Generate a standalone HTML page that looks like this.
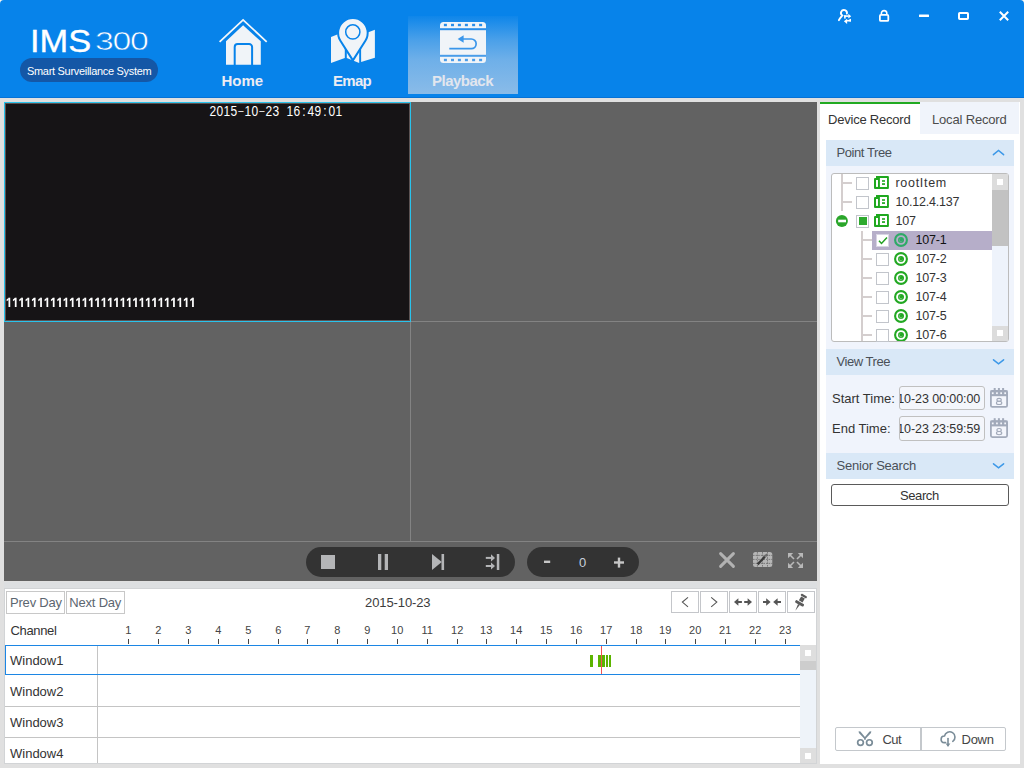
<!DOCTYPE html>
<html>
<head>
<meta charset="utf-8">
<title>IMS 300</title>
<style>
html,body{margin:0;padding:0;}
body{width:1024px;height:768px;overflow:hidden;background:#e0e0e0;font-family:"Liberation Sans",sans-serif;position:relative;}
.abs{position:absolute;}
.t{position:absolute;white-space:nowrap;line-height:1;}
#hdr{left:0;top:0;width:1024px;height:98px;background:#0783ea;border-radius:4px 4px 0 0;}
#hdrline{left:0;top:97px;width:1024px;height:1px;background:#0672d6;}
#pill{left:20px;top:58px;width:138px;height:24px;border-radius:12px;background:#1457a6;}
#pbtab{left:408px;top:16px;width:110px;height:78px;background:linear-gradient(to bottom,rgba(232,228,231,0.03) 0%,rgba(232,228,231,0.30) 31%,rgba(232,228,231,0.46) 56%,rgba(232,228,231,0.58) 100%);}
.nav{font-weight:bold;font-size:15px;color:#ececf2;}
/* grid */
#grid{left:4px;top:102px;width:813px;height:479px;background:#626262;}
.gl{position:absolute;background:#838383;}
#vid{left:4px;top:102px;width:405px;height:218px;border:1px solid #29c3ec;background:#161416;box-shadow:inset 0 0 0 1px #5c5252;}
.osd{font-family:"Liberation Mono",monospace;color:#fff;}
.pillc{position:absolute;background:#333;border-radius:15px;height:30px;top:547px;}
/* timeline */
#tl{left:4px;top:588px;width:811px;height:174px;background:#fff;border:1px solid #d2d4d6;}
.btn{position:absolute;box-sizing:border-box;border:1px solid #c8c8c8;background:#fff;}
.hl{position:absolute;height:1px;background:#c4c4c4;}
.tick{position:absolute;width:1px;height:5px;top:639px;background:#444;}
.hr{position:absolute;font-size:11px;color:#444;top:625px;width:30px;text-align:center;line-height:1;}
/* right panel */
#rp{left:820px;top:102px;width:200px;height:662px;background:#fff;}
.sec{position:absolute;left:826px;width:188px;height:26px;background:#d9e8f7;}
.tint{position:absolute;left:826px;width:188px;background:#f0f4fc;}
.sect{font-size:13px;color:#4a5058;}
.cb{position:absolute;box-sizing:border-box;width:13px;height:13px;border:1px solid #c2c5cb;background:#fff;}
.tr{font-size:12.5px;color:#333;letter-spacing:-0.2px;}
.inp{position:absolute;box-sizing:border-box;left:899px;width:86px;height:24px;border:1px solid #c0c0c0;border-radius:3px;background:#f4f6fb;overflow:hidden;}
</style>
</head>
<body>
<!-- HEADER -->
<div class="abs" style="left:0;top:0;width:1024px;height:4px;background:#fbf6ee;"></div>
<div id="hdr" class="abs"></div>
<div id="hdrline" class="abs"></div>
<div class="t" id="ims" style="left:30px;top:26px;font-size:31px;color:#fff;-webkit-text-stroke:0.35px #fff;transform:scaleX(1.11);transform-origin:0 0;">IMS</div>
<div class="t" id="n300" style="left:95px;top:28px;font-size:26px;color:#fff;letter-spacing:-1px;-webkit-text-stroke:0.55px #0783ea;transform:scaleX(1.3);transform-origin:0 0;">300</div>
<div id="pill" class="abs"></div>
<div class="t" id="sss" style="left:26.6px;top:66px;font-size:11.5px;color:#fff;letter-spacing:-0.3px;transform:scaleX(0.953);transform-origin:0 0;">Smart Surveillance System</div>
<div id="pbtab" class="abs"></div>

<svg class="abs" style="left:0;top:0;" width="1024" height="98" viewBox="0 0 1024 98">
 <!-- home -->
 <polygon points="226,41.3 243.1,25.3 260.8,41.3 260.8,64.8 226,64.8" fill="#f0f4f8"/>
 <polyline points="219.6,41.8 243.1,19.9 266.7,41.8" fill="none" stroke="#f4f7fa" stroke-width="1.8"/>
 <path d="M234.7 65.5 V47 a3 3 0 0 1 3 -3 h11.4 a3 3 0 0 1 3 3 V65.5" fill="none" stroke="#0783ea" stroke-width="2"/>
 <!-- emap -->
 <polygon points="331,36.9 344.8,31.5 344.8,58.1 331,62.9" fill="#f0f4f8"/>
 <polygon points="346.8,30 359.2,30 359.2,63.1 346.8,58" fill="#f0f4f8"/>
 <polygon points="361.1,35 374.9,29.7 374.9,57.8 361.1,62" fill="#f0f4f8"/>
 <path d="M352.9 60.4 L340.4 40.8 A14.8 14.8 0 1 1 365.4 40.8 Z" fill="#f0f4f8" stroke="#0783ea" stroke-width="2" stroke-linejoin="round"/>
 <circle cx="352.8" cy="31.9" r="7.1" fill="none" stroke="#0783ea" stroke-width="1.5"/>
 <!-- playback -->
 <rect x="440" y="22" width="46" height="41" rx="3.5" fill="#f0f4f8"/>
 <rect x="440" y="28.2" width="46" height="2" fill="#2a8ee9"/>
 <rect x="440" y="54.8" width="46" height="2" fill="#4a9de9"/>
 <g fill="#2a8ee9">
  <rect x="443.9" y="23.8" width="3" height="2.4"/><rect x="451" y="23.8" width="3" height="2.4"/><rect x="457.9" y="23.8" width="3" height="2.4"/><rect x="464.9" y="23.8" width="3" height="2.4"/><rect x="472.1" y="23.8" width="3" height="2.4"/><rect x="479.1" y="23.8" width="3" height="2.4"/>
 </g>
 <g fill="#4a9de9">
  <rect x="443.9" y="58.8" width="3" height="2.4"/><rect x="451" y="58.8" width="3" height="2.4"/><rect x="457.9" y="58.8" width="3" height="2.4"/><rect x="464.9" y="58.8" width="3" height="2.4"/><rect x="472.1" y="58.8" width="3" height="2.4"/><rect x="479.1" y="58.8" width="3" height="2.4"/>
 </g>
 <path d="M449.3 48.7 H471.3 A4.85 4.85 0 0 0 471.3 39 H463" fill="none" stroke="#3a96ea" stroke-width="1.7"/>
 <polygon points="457.7,39 463.6,35.2 463.6,42.8" fill="#3a96ea"/>
 <!-- window controls -->
 <path d="M846.9 13.6 A3 3 0 1 0 842.3 15.5 C841 17 839.8 18.3 838.9 20.2" fill="none" stroke="#fff" stroke-width="1.9" stroke-linecap="round"/>
 <g fill="#fff">
  <rect x="844.1" y="15.3" width="4.6" height="1.6"/><rect x="844.1" y="15.3" width="1.6" height="3.3"/>
  <polygon points="848.3,13.8 851.2,16.2 848.3,18.6"/>
  <rect x="846.7" y="19.9" width="4.3" height="1.6"/><rect x="849.4" y="18.9" width="1.6" height="2.6"/>
  <polygon points="847.1,18.8 843.9,21.3 847.1,23.9"/>
 </g>
 <rect x="879.9" y="14.9" width="8.4" height="6" rx="1" fill="none" stroke="#fff" stroke-width="1.8"/>
 <path d="M881.4 14.5 V13.3 a2.7 2.7 0 0 1 5.4 0 V14.5" fill="none" stroke="#fff" stroke-width="1.6"/>
 <rect x="919" y="14.6" width="10" height="2.4" rx="0.5" fill="#fff"/>
 <rect x="959" y="13" width="9" height="6" rx="0.8" fill="none" stroke="#fff" stroke-width="2"/>
 <path d="M999.8 11.8 L1008.2 20.2 M1008.2 11.8 L999.8 20.2" stroke="#fff" stroke-width="2" fill="none"/>
</svg>
<div class="t nav" id="nhome" style="left:221.5px;top:72.5px;">Home</div>
<div class="t nav" id="nemap" style="left:333px;top:72.5px;letter-spacing:-0.7px;">Emap</div>
<div class="t nav" id="nplay" style="left:432px;top:72.5px;color:#e2e6ee;letter-spacing:-0.5px;">Playback</div>

<!-- GRID -->
<div id="grid" class="abs"></div>
<div class="gl" style="left:410px;top:102px;width:1px;height:439px;"></div>
<div class="gl" style="left:4px;top:321px;width:813px;height:1px;"></div>
<div class="gl" style="left:4px;top:541px;width:813px;height:1px;"></div>
<div id="vid" class="abs"></div>
<div class="t" id="osd1" style="left:209.3px;top:103.5px;font-size:12px;color:#fff;transform:scaleY(1.15);transform-origin:0 0;"><span style="display:inline-block;width:7px;text-align:center;">2</span><span style="display:inline-block;width:7px;text-align:center;">0</span><span style="display:inline-block;width:7px;text-align:center;">1</span><span style="display:inline-block;width:7px;text-align:center;">5</span><span style="display:inline-block;width:7px;text-align:center;font-size:9.5px;vertical-align:0.6px;">&#8211;</span><span style="display:inline-block;width:7px;text-align:center;">1</span><span style="display:inline-block;width:7px;text-align:center;">0</span><span style="display:inline-block;width:7px;text-align:center;font-size:9.5px;vertical-align:0.6px;">&#8211;</span><span style="display:inline-block;width:7px;text-align:center;">2</span><span style="display:inline-block;width:7px;text-align:center;">3</span><span style="display:inline-block;width:7px;text-align:center;">&nbsp;</span><span style="display:inline-block;width:7px;text-align:center;">1</span><span style="display:inline-block;width:7px;text-align:center;">6</span><span style="display:inline-block;width:7px;text-align:center;">:</span><span style="display:inline-block;width:7px;text-align:center;">4</span><span style="display:inline-block;width:7px;text-align:center;">9</span><span style="display:inline-block;width:7px;text-align:center;">:</span><span style="display:inline-block;width:7px;text-align:center;">0</span><span style="display:inline-block;width:7px;text-align:center;">1</span></div>
<svg class="abs" id="osd2" style="left:4px;top:294px;" width="200" height="16" viewBox="4 294 200 16"><g fill="#fff"><rect x="8.50" y="297.7" width="1.75" height="9.3"/><polygon points="8.70,297.7 8.70,299.9 6.60,301.2 6.60,299.4"/><rect x="14.83" y="297.7" width="1.75" height="9.3"/><polygon points="15.03,297.7 15.03,299.9 12.93,301.2 12.93,299.4"/><rect x="21.16" y="297.7" width="1.75" height="9.3"/><polygon points="21.36,297.7 21.36,299.9 19.26,301.2 19.26,299.4"/><rect x="27.49" y="297.7" width="1.75" height="9.3"/><polygon points="27.69,297.7 27.69,299.9 25.59,301.2 25.59,299.4"/><rect x="33.82" y="297.7" width="1.75" height="9.3"/><polygon points="34.02,297.7 34.02,299.9 31.92,301.2 31.92,299.4"/><rect x="40.15" y="297.7" width="1.75" height="9.3"/><polygon points="40.35,297.7 40.35,299.9 38.25,301.2 38.25,299.4"/><rect x="46.48" y="297.7" width="1.75" height="9.3"/><polygon points="46.68,297.7 46.68,299.9 44.58,301.2 44.58,299.4"/><rect x="52.81" y="297.7" width="1.75" height="9.3"/><polygon points="53.01,297.7 53.01,299.9 50.91,301.2 50.91,299.4"/><rect x="59.14" y="297.7" width="1.75" height="9.3"/><polygon points="59.34,297.7 59.34,299.9 57.24,301.2 57.24,299.4"/><rect x="65.47" y="297.7" width="1.75" height="9.3"/><polygon points="65.67,297.7 65.67,299.9 63.57,301.2 63.57,299.4"/><rect x="71.80" y="297.7" width="1.75" height="9.3"/><polygon points="72.00,297.7 72.00,299.9 69.90,301.2 69.90,299.4"/><rect x="78.13" y="297.7" width="1.75" height="9.3"/><polygon points="78.33,297.7 78.33,299.9 76.23,301.2 76.23,299.4"/><rect x="84.46" y="297.7" width="1.75" height="9.3"/><polygon points="84.66,297.7 84.66,299.9 82.56,301.2 82.56,299.4"/><rect x="90.79" y="297.7" width="1.75" height="9.3"/><polygon points="90.99,297.7 90.99,299.9 88.89,301.2 88.89,299.4"/><rect x="97.12" y="297.7" width="1.75" height="9.3"/><polygon points="97.32,297.7 97.32,299.9 95.22,301.2 95.22,299.4"/><rect x="103.45" y="297.7" width="1.75" height="9.3"/><polygon points="103.65,297.7 103.65,299.9 101.55,301.2 101.55,299.4"/><rect x="109.78" y="297.7" width="1.75" height="9.3"/><polygon points="109.98,297.7 109.98,299.9 107.88,301.2 107.88,299.4"/><rect x="116.11" y="297.7" width="1.75" height="9.3"/><polygon points="116.31,297.7 116.31,299.9 114.21,301.2 114.21,299.4"/><rect x="122.44" y="297.7" width="1.75" height="9.3"/><polygon points="122.64,297.7 122.64,299.9 120.54,301.2 120.54,299.4"/><rect x="128.77" y="297.7" width="1.75" height="9.3"/><polygon points="128.97,297.7 128.97,299.9 126.87,301.2 126.87,299.4"/><rect x="135.10" y="297.7" width="1.75" height="9.3"/><polygon points="135.30,297.7 135.30,299.9 133.20,301.2 133.20,299.4"/><rect x="141.43" y="297.7" width="1.75" height="9.3"/><polygon points="141.63,297.7 141.63,299.9 139.53,301.2 139.53,299.4"/><rect x="147.76" y="297.7" width="1.75" height="9.3"/><polygon points="147.96,297.7 147.96,299.9 145.86,301.2 145.86,299.4"/><rect x="154.09" y="297.7" width="1.75" height="9.3"/><polygon points="154.29,297.7 154.29,299.9 152.19,301.2 152.19,299.4"/><rect x="160.42" y="297.7" width="1.75" height="9.3"/><polygon points="160.62,297.7 160.62,299.9 158.52,301.2 158.52,299.4"/><rect x="166.75" y="297.7" width="1.75" height="9.3"/><polygon points="166.95,297.7 166.95,299.9 164.85,301.2 164.85,299.4"/><rect x="173.08" y="297.7" width="1.75" height="9.3"/><polygon points="173.28,297.7 173.28,299.9 171.18,301.2 171.18,299.4"/><rect x="179.41" y="297.7" width="1.75" height="9.3"/><polygon points="179.61,297.7 179.61,299.9 177.51,301.2 177.51,299.4"/><rect x="185.74" y="297.7" width="1.75" height="9.3"/><polygon points="185.94,297.7 185.94,299.9 183.84,301.2 183.84,299.4"/><rect x="192.07" y="297.7" width="1.75" height="9.3"/><polygon points="192.27,297.7 192.27,299.9 190.17,301.2 190.17,299.4"/></g></svg>

<!-- CONTROL BAR -->
<div class="pillc" style="left:306px;width:209px;"></div>
<div class="pillc" style="left:527px;width:112px;"></div>


<svg class="abs" style="left:0;top:541px;" width="1024" height="40" viewBox="0 541 1024 40">
 <g fill="#b4b5b7">
  <rect x="321" y="555" width="14" height="14"/>
  <rect x="378" y="554" width="3.3" height="16"/><rect x="384.7" y="554" width="3.3" height="16"/>
  <polygon points="432,554 441.8,562 432,570"/><rect x="441.5" y="554" width="2.6" height="16"/>
  <rect x="496.8" y="554" width="2.5" height="16"/>
  <rect x="485.8" y="556.9" width="5.6" height="2"/><polygon points="491,554.3 495,557.9 491,561.5"/>
  <rect x="485.8" y="565" width="5.6" height="2"/><polygon points="491,562.4 495,566 491,569.6"/>
 </g>
 <g fill="#c6c6c6">
  <rect x="544" y="560.6" width="6.2" height="2.4"/>
  <rect x="614" y="561.3" width="10" height="2.4"/><rect x="617.8" y="557.6" width="2.4" height="10"/>
 </g>
 <path d="M720.6 553.6 L733.4 566.4 M733.4 553.6 L720.6 566.4" stroke="#b2b2b2" stroke-width="3" stroke-linecap="round" fill="none"/>
 <!-- table/pen -->
 <rect x="753" y="552" width="19.3" height="15" rx="2.5" fill="#b6b6b6"/>
 <g stroke="#626262" stroke-width="0.9" opacity="0.8">
  <path d="M753 555.4 H772.3 M753 559.4 H772.3 M753 563.4 H772.3" stroke-dasharray="1.6 1"/>
  <path d="M757.4 552 V567 M762.5 552 V567 M767.5 552 V567" stroke-dasharray="1.6 1"/>
 </g>
 <path d="M757.6 564.4 L764.9 556.6" stroke="#3a3a3a" stroke-width="2.3" fill="none"/>
 <path d="M765.1 556.4 L767.3 554.2" stroke="#6a6a6a" stroke-width="2.3" fill="none"/>
 <!-- fullscreen -->
 <g fill="#b8b8b8" stroke="#b8b8b8" stroke-width="1.6">
  <path d="M794 559 L790 555 M797 559 L801 555 M794 562 L790 566 M797 562 L801 566" fill="none"/>
 </g>
 <g fill="#b8b8b8">
  <polygon points="788,553 793.2,553 788,558.2"/>
  <polygon points="803,553 797.8,553 803,558.2"/>
  <polygon points="788,568 793.2,568 788,562.8"/>
  <polygon points="803,568 797.8,568 803,562.8"/>
 </g>
</svg>
<div class="t" id="zero" style="left:579px;top:556px;font-size:13px;color:#c8d0dc;">0</div>

<div class="abs" style="left:4px;top:582px;width:813px;height:6px;background:#dddfe1;"></div>
<!-- TIMELINE -->
<div id="tl" class="abs"></div>

<div class="btn" style="left:6px;top:591px;width:59px;height:23px;"></div>
<div class="btn" style="left:66px;top:591px;width:59px;height:23px;"></div>
<div class="t" id="prev" style="left:10px;top:596px;font-size:13px;color:#5c6670;letter-spacing:-0.2px;">Prev Day</div>
<div class="t" id="next" style="left:69.3px;top:596px;font-size:13px;color:#5c6670;letter-spacing:-0.2px;">Next Day</div>
<div class="t" id="date" style="left:365px;top:596px;font-size:13px;color:#3c3c3c;letter-spacing:-0.1px;">2015-10-23</div>
<div class="btn" style="left:671px;top:591px;width:28px;height:22px;border-color:#c4c6ca;"></div>
<div class="btn" style="left:700px;top:591px;width:28px;height:22px;border-color:#c4c6ca;"></div>
<div class="btn" style="left:729px;top:591px;width:28px;height:22px;border-color:#c4c6ca;"></div>
<div class="btn" style="left:758px;top:591px;width:28px;height:22px;border-color:#c4c6ca;"></div>
<div class="btn" style="left:787px;top:591px;width:28px;height:22px;border-color:#c4c6ca;"></div>
<div class="t" id="chan" style="left:10.5px;top:623.5px;font-size:13px;color:#333;letter-spacing:-0.35px;">Channel</div>
<div class="tick" style="left:128px;"></div>
<div class="hr" style="left:113.2px;">1</div>
<div class="tick" style="left:158px;"></div>
<div class="hr" style="left:143.2px;">2</div>
<div class="tick" style="left:188px;"></div>
<div class="hr" style="left:173.2px;">3</div>
<div class="tick" style="left:218px;"></div>
<div class="hr" style="left:203.2px;">4</div>
<div class="tick" style="left:248px;"></div>
<div class="hr" style="left:233.2px;">5</div>
<div class="tick" style="left:278px;"></div>
<div class="hr" style="left:263.2px;">6</div>
<div class="tick" style="left:307px;"></div>
<div class="hr" style="left:292.2px;">7</div>
<div class="tick" style="left:337px;"></div>
<div class="hr" style="left:322.2px;">8</div>
<div class="tick" style="left:367px;"></div>
<div class="hr" style="left:352.2px;">9</div>
<div class="tick" style="left:397px;"></div>
<div class="hr" style="left:382.2px;">10</div>
<div class="tick" style="left:427px;"></div>
<div class="hr" style="left:412.2px;">11</div>
<div class="tick" style="left:457px;"></div>
<div class="hr" style="left:442.2px;">12</div>
<div class="tick" style="left:486px;"></div>
<div class="hr" style="left:471.2px;">13</div>
<div class="tick" style="left:516px;"></div>
<div class="hr" style="left:501.2px;">14</div>
<div class="tick" style="left:546px;"></div>
<div class="hr" style="left:531.2px;">15</div>
<div class="tick" style="left:576px;"></div>
<div class="hr" style="left:561.2px;">16</div>
<div class="tick" style="left:606px;"></div>
<div class="hr" style="left:591.2px;">17</div>
<div class="tick" style="left:636px;"></div>
<div class="hr" style="left:621.2px;">18</div>
<div class="tick" style="left:665px;"></div>
<div class="hr" style="left:650.2px;">19</div>
<div class="tick" style="left:695px;"></div>
<div class="hr" style="left:680.2px;">20</div>
<div class="tick" style="left:725px;"></div>
<div class="hr" style="left:710.2px;">21</div>
<div class="tick" style="left:755px;"></div>
<div class="hr" style="left:740.2px;">22</div>
<div class="tick" style="left:785px;"></div>
<div class="hr" style="left:770.2px;">23</div>
<div class="abs" style="left:97px;top:646px;width:1px;height:117px;background:#c4c4c4;"></div>
<div class="hl" style="left:5px;top:706px;width:795px;"></div>
<div class="hl" style="left:5px;top:737px;width:795px;"></div>
<div class="abs" id="selrow" style="left:5px;top:645px;width:795px;height:28px;border:1px solid #1c86e4;border-right:none;"></div>
<div class="t" id="w1" style="left:10px;top:654px;font-size:13px;color:#333;">Window1</div>
<div class="t" id="w2" style="left:10px;top:685px;font-size:13px;color:#333;">Window2</div>
<div class="t" id="w3" style="left:10px;top:716px;font-size:13px;color:#333;">Window3</div>
<div class="t" id="w4" style="left:10px;top:747px;font-size:13px;color:#333;">Window4</div>
<div class="abs" style="left:590px;top:655px;width:3px;height:12px;background:#5cb400;"></div>
<div class="abs" style="left:598px;top:655px;width:7px;height:12px;background:#5cb400;"></div>
<div class="abs" style="left:606px;top:655px;width:2px;height:12px;background:#5cb400;"></div>
<div class="abs" style="left:609px;top:655px;width:2px;height:12px;background:#5cb400;"></div>
<div class="abs" style="left:601px;top:646px;width:1px;height:28px;background:#f25454;"></div>
<div class="abs" style="left:800px;top:645px;width:16px;height:118px;background:#eef3f9;"></div>
<div class="abs" style="left:800px;top:645px;width:16px;height:16px;background:#dedede;"></div>
<div class="abs" style="left:805px;top:650px;width:6px;height:6px;background:#fff;"></div>
<div class="abs" style="left:800px;top:661px;width:16px;height:9px;background:#cdcdcd;"></div>
<div class="abs" style="left:800px;top:748px;width:16px;height:15px;background:#dedede;"></div>
<div class="abs" style="left:805px;top:753px;width:6px;height:6px;background:#fff;"></div>
<svg class="abs" style="left:660px;top:588px;" width="160" height="30" viewBox="660 588 160 30">
 <path d="M688 597.4 L682.4 602.1 L688 606.8" fill="none" stroke="#555" stroke-width="1.1"/>
 <path d="M711.2 597.4 L716.8 602.1 L711.2 606.8" fill="none" stroke="#555" stroke-width="1.1"/>
 <g fill="#555">
  <polygon points="734,602 738.4,598.2 738.4,605.8"/><rect x="737.5" y="601" width="4.4" height="2"/>
  <polygon points="752,602 747.6,598.2 747.6,605.8"/><rect x="744.2" y="601" width="4.4" height="2"/>
  <polygon points="770.6,602 766.2,598.2 766.2,605.8"/><rect x="763" y="601" width="4.4" height="2"/>
  <polygon points="773.2,602 777.6,598.2 777.6,605.8"/><rect x="776.6" y="601" width="4.4" height="2"/>
 </g>
 <!-- pin -->
 <g transform="translate(799.5 603.5) rotate(30)" fill="#5a5a5a">
  <rect x="-3.3" y="-9.7" width="6.6" height="2.1" rx="0.8"/>
  <rect x="-2.1" y="-7" width="4.2" height="4.6"/>
  <rect x="-4.8" y="-1.5" width="9.6" height="2.7" rx="1"/>
  <polygon points="-1,1.2 1,1.2 0,8.4"/>
 </g>
</svg>

<!-- RIGHT PANEL -->
<div id="rp" class="abs"></div>
<div class="abs" style="left:820px;top:102px;width:100px;height:2px;background:#22aa22;"></div>
<div class="abs" style="left:920px;top:102px;width:99px;height:32px;background:#f0f4fb;"></div>
<div class="t" id="tab1" style="left:828px;top:113px;font-size:13px;color:#333;letter-spacing:-0.22px;">Device Record</div>
<div class="t" id="tab2" style="left:932px;top:113px;font-size:13px;color:#4c4c4c;letter-spacing:-0.17px;">Local Record</div>
<div class="sec" style="top:140px;"></div>
<div class="t sect" id="pt" style="left:836.5px;top:146px;letter-spacing:-0.42px;">Point Tree</div>
<div class="tint" style="top:166px;height:183px;"></div>
<div class="abs" id="tree" style="left:831px;top:173px;width:176px;height:167px;border:1px solid #bcbcbc;border-radius:3px;background:#fff;overflow:hidden;"></div>
<div class="abs" style="left:992px;top:174px;width:16px;height:167px;background:#eef3fb;"></div>
<div class="abs" style="left:992px;top:174px;width:16px;height:16px;background:#dcdcdc;"></div>
<div class="abs" style="left:997px;top:179px;width:6px;height:6px;background:#fff;"></div>
<div class="abs" style="left:992px;top:190px;width:16px;height:56px;background:#c2c2c2;"></div>
<div class="abs" style="left:992px;top:326px;width:16px;height:15px;background:#dcdcdc;"></div>
<div class="abs" style="left:997px;top:330px;width:6px;height:6px;background:#fff;"></div>
<div class="abs" style="left:872px;top:231px;width:120px;height:19px;background:#b6aec9;"></div>
<div class="abs" style="left:841px;top:174px;width:2px;height:37px;background:#d4cece;"></div>
<div class="abs" style="left:841px;top:182px;width:11px;height:2px;background:#d4cece;"></div>
<div class="abs" style="left:841px;top:201px;width:11px;height:2px;background:#d4cece;"></div>
<div class="abs" style="left:861px;top:231px;width:2px;height:110px;background:#d4cece;"></div>
<div class="abs" style="left:861px;top:239px;width:11px;height:2px;background:#d4cece;"></div>
<div class="abs" style="left:861px;top:258px;width:11px;height:2px;background:#d4cece;"></div>
<div class="abs" style="left:861px;top:277px;width:11px;height:2px;background:#d4cece;"></div>
<div class="abs" style="left:861px;top:296px;width:11px;height:2px;background:#d4cece;"></div>
<div class="abs" style="left:861px;top:315px;width:11px;height:2px;background:#d4cece;"></div>
<div class="abs" style="left:861px;top:334px;width:11px;height:2px;background:#d4cece;"></div>
<div class="cb" style="left:856px;top:177.0px;"></div>
<div class="t tr" id="tr0" style="left:895.5px;top:176.8px;letter-spacing:0.7px;">rootItem</div>
<div class="cb" style="left:856px;top:196.0px;"></div>
<div class="t tr" id="tr1" style="left:895.5px;top:195.8px;">10.12.4.137</div>
<div class="cb" style="left:856px;top:215.0px;"></div>
<div class="t tr" id="tr2" style="left:895.5px;top:214.8px;">107</div>
<div class="abs" style="left:859px;top:217px;width:8px;height:8px;background:#2eaa2e;"></div>
<div class="cb" style="left:876px;top:234px;border-color:#d8d4e4;"></div>
<div class="t tr" id="ch0" style="left:915.5px;top:233.5px;color:#111;">107-1</div>
<div class="cb" style="left:876px;top:253px;"></div>
<div class="t tr" id="ch1" style="left:915.5px;top:252.5px;">107-2</div>
<div class="cb" style="left:876px;top:272px;"></div>
<div class="t tr" id="ch2" style="left:915.5px;top:271.5px;">107-3</div>
<div class="cb" style="left:876px;top:291px;"></div>
<div class="t tr" id="ch3" style="left:915.5px;top:290.5px;">107-4</div>
<div class="cb" style="left:876px;top:310px;"></div>
<div class="t tr" id="ch4" style="left:915.5px;top:309.5px;">107-5</div>
<div class="cb" style="left:876px;top:329px;"></div>
<div class="t tr" id="ch5" style="left:915.5px;top:328.5px;">107-6</div>
<svg class="abs" style="left:826px;top:170px;" width="190" height="171" viewBox="826 170 190 171">
<path d="M876 175.9 h11.9 a1 1 0 0 1 1 1 v11 a1 1 0 0 1 -1 1 h-12.9 a1 1 0 0 1 -1 -1 v-8.9 a1 1 0 0 1 1 -1 h1 z" fill="#1fa81f"/><rect x="876" y="180.0" width="2" height="6.9" fill="#fff"/><rect x="879.9" y="178.0" width="7.1" height="9" fill="#fff"/><rect x="882" y="180.2" width="3" height="1.6" fill="#1fa81f"/><rect x="882" y="183.2" width="3" height="1.7" fill="#1fa81f"/>
<path d="M876 194.9 h11.9 a1 1 0 0 1 1 1 v11 a1 1 0 0 1 -1 1 h-12.9 a1 1 0 0 1 -1 -1 v-8.9 a1 1 0 0 1 1 -1 h1 z" fill="#1fa81f"/><rect x="876" y="199.0" width="2" height="6.9" fill="#fff"/><rect x="879.9" y="197.0" width="7.1" height="9" fill="#fff"/><rect x="882" y="199.2" width="3" height="1.6" fill="#1fa81f"/><rect x="882" y="202.2" width="3" height="1.7" fill="#1fa81f"/>
<path d="M876 213.9 h11.9 a1 1 0 0 1 1 1 v11 a1 1 0 0 1 -1 1 h-12.9 a1 1 0 0 1 -1 -1 v-8.9 a1 1 0 0 1 1 -1 h1 z" fill="#1fa81f"/><rect x="876" y="218.0" width="2" height="6.9" fill="#fff"/><rect x="879.9" y="216.0" width="7.1" height="9" fill="#fff"/><rect x="882" y="218.2" width="3" height="1.6" fill="#1fa81f"/><rect x="882" y="221.2" width="3" height="1.7" fill="#1fa81f"/>
<circle cx="841.9" cy="220.9" r="6" fill="#2aa62a"/><rect x="838.2" y="219.7" width="7.8" height="2.6" fill="#fff"/>
<circle cx="901" cy="240.0" r="5.9" fill="none" stroke="#2eaa66" stroke-width="2.1"/><circle cx="901" cy="240.0" r="3" fill="#2eaa66"/><path d="M902.40 240.90 a1.7 1.7 0 1 1 -2.3 -2.3" fill="none" stroke="#b6aec9" stroke-width="0.7" opacity="0.55"/>
<circle cx="901" cy="259.0" r="5.9" fill="none" stroke="#22a822" stroke-width="2.1"/><circle cx="901" cy="259.0" r="3" fill="#22a822"/><path d="M902.40 259.90 a1.7 1.7 0 1 1 -2.3 -2.3" fill="none" stroke="#ffffff" stroke-width="0.7" opacity="0.55"/>
<circle cx="901" cy="278.0" r="5.9" fill="none" stroke="#22a822" stroke-width="2.1"/><circle cx="901" cy="278.0" r="3" fill="#22a822"/><path d="M902.40 278.90 a1.7 1.7 0 1 1 -2.3 -2.3" fill="none" stroke="#ffffff" stroke-width="0.7" opacity="0.55"/>
<circle cx="901" cy="297.0" r="5.9" fill="none" stroke="#22a822" stroke-width="2.1"/><circle cx="901" cy="297.0" r="3" fill="#22a822"/><path d="M902.40 297.90 a1.7 1.7 0 1 1 -2.3 -2.3" fill="none" stroke="#ffffff" stroke-width="0.7" opacity="0.55"/>
<circle cx="901" cy="316.0" r="5.9" fill="none" stroke="#22a822" stroke-width="2.1"/><circle cx="901" cy="316.0" r="3" fill="#22a822"/><path d="M902.40 316.90 a1.7 1.7 0 1 1 -2.3 -2.3" fill="none" stroke="#ffffff" stroke-width="0.7" opacity="0.55"/>
<circle cx="901" cy="335.0" r="5.9" fill="none" stroke="#22a822" stroke-width="2.1"/><circle cx="901" cy="335.0" r="3" fill="#22a822"/><path d="M902.40 335.90 a1.7 1.7 0 1 1 -2.3 -2.3" fill="none" stroke="#ffffff" stroke-width="0.7" opacity="0.55"/>
<path d="M879 240.8 L881.5 243.5 L887 237.6" fill="none" stroke="#22a022" stroke-width="1.5"/>
</svg>
<div class="sec" style="top:349px;"></div>
<div class="t sect" id="vt" style="left:836.5px;top:355px;letter-spacing:-0.45px;">View Tree</div>
<div class="tint" style="top:375px;height:78px;"></div>
<div class="t" id="st" style="left:832px;top:392px;font-size:13px;color:#333;">Start Time:</div>
<div class="t" id="et" style="left:832px;top:422px;font-size:13px;color:#333;">End Time:</div>
<div class="inp" style="top:386px;"><div class="t" id="in1" style="right:3.8px;top:5.5px;font-size:12.5px;color:#333;letter-spacing:-0.08px;">10-23 00:00:00</div></div>
<div class="inp" style="top:416px;height:25px;"><div class="t" id="in2" style="right:3.8px;top:6px;font-size:12.5px;color:#333;letter-spacing:-0.08px;">10-23 23:59:59</div></div>
<div class="sec" style="top:453px;"></div>
<div class="t sect" id="ss" style="left:836.5px;top:459px;letter-spacing:-0.22px;">Senior Search</div>
<div class="abs" style="left:831px;top:484px;width:176px;height:20px;border:1px solid #5a5a5a;border-radius:3px;background:#fff;"></div>
<div class="t" id="srch" style="left:900px;top:489px;font-size:13px;color:#333;letter-spacing:-0.4px;">Search</div>
<div class="abs" style="left:835px;top:727px;width:169px;height:22px;border:1px solid #c4c8cc;border-radius:2px;background:#fff;"></div>
<div class="abs" style="left:920px;top:727px;width:2px;height:24px;background:#c4c8cc;"></div>
<div class="t" id="cut" style="left:882.5px;top:733px;font-size:13px;color:#444;letter-spacing:-0.6px;">Cut</div>
<div class="t" id="down" style="left:961.5px;top:733px;font-size:13px;color:#444;letter-spacing:-0.25px;">Down</div>
<svg class="abs" style="left:820px;top:100px;" width="204" height="668" viewBox="820 100 204 668">
 <path d="M993.4 154.7 L998.5 150.5 L1003.6 154.7" fill="none" stroke="#3c98e8" stroke-width="1.5" stroke-linecap="round"/>
 <path d="M993.5 359.8 L998.55 363.9 L1003.6 359.8" fill="none" stroke="#3c98e8" stroke-width="1.5" stroke-linecap="round"/>
 <path d="M993.5 463.8 L998.55 467.9 L1003.6 463.8" fill="none" stroke="#3c98e8" stroke-width="1.5" stroke-linecap="round"/>
 <g>
  <rect x="990.9" y="390.9" width="16.2" height="16" rx="1.5" fill="#f4f6fc" stroke="#a2aaba" stroke-width="1.8"/>
  <rect x="990.5" y="390.4" width="17" height="5.8" fill="#a2aaba"/>
  <rect x="993.7" y="388" width="2" height="3" fill="#a2aaba"/><rect x="997.9" y="388" width="2" height="3" fill="#a2aaba"/><rect x="1002.1" y="388" width="2" height="3" fill="#a2aaba"/>
  <g fill="#f4f6fb"><rect x="991.9" y="392.3" width="1.7" height="1.8"/><rect x="996.1" y="392.3" width="1.7" height="1.8"/><rect x="1000.3" y="392.3" width="1.7" height="1.8"/><rect x="1004.3" y="392.3" width="1.7" height="1.8"/></g>
  <ellipse cx="999.1" cy="399.8" rx="2.2" ry="1.45" fill="none" stroke="#a2aaba" stroke-width="1.1"/>
  <ellipse cx="999.1" cy="402.9" rx="2.7" ry="1.65" fill="none" stroke="#a2aaba" stroke-width="1.1"/>
 </g>
 <g transform="translate(0 30.2)">
  <rect x="990.9" y="390.9" width="16.2" height="16" rx="1.5" fill="#f4f6fc" stroke="#a2aaba" stroke-width="1.8"/>
  <rect x="990.5" y="390.4" width="17" height="5.8" fill="#a2aaba"/>
  <rect x="993.7" y="388" width="2" height="3" fill="#a2aaba"/><rect x="997.9" y="388" width="2" height="3" fill="#a2aaba"/><rect x="1002.1" y="388" width="2" height="3" fill="#a2aaba"/>
  <g fill="#f4f6fb"><rect x="991.9" y="392.3" width="1.7" height="1.8"/><rect x="996.1" y="392.3" width="1.7" height="1.8"/><rect x="1000.3" y="392.3" width="1.7" height="1.8"/><rect x="1004.3" y="392.3" width="1.7" height="1.8"/></g>
  <ellipse cx="999.1" cy="399.8" rx="2.2" ry="1.45" fill="none" stroke="#a2aaba" stroke-width="1.1"/>
  <ellipse cx="999.1" cy="402.9" rx="2.7" ry="1.65" fill="none" stroke="#a2aaba" stroke-width="1.1"/>
 </g>
 <!-- scissors -->
 <g fill="none" stroke="#7a8c98" stroke-width="1.7">
  <circle cx="860.5" cy="742.6" r="2.85"/><circle cx="869.4" cy="742.6" r="2.85"/>
 </g>
 <path d="M858.6 731.2 L860.4 731.4 L864.95 736.9 L869.5 731.4 L871.3 731.2 L871 733 L865.8 738.6 V739.8 H864.1 V738.6 L858.9 733 Z" fill="#7a8c98"/>
 <!-- cloud down -->
 <g fill="none" stroke="#7a8c98" stroke-width="1.6" stroke-linecap="round" stroke-linejoin="round">
  <path d="M945.6 742.6 H944.3 A3.3 3.3 0 0 1 944.5 736 A5.3 5.3 0 1 1 952.8 741.4"/>
  <path d="M948 738.6 V745.6"/>
 </g>
 <polygon points="945.6,743.6 950.4,743.6 948,746.8" fill="#7a8c98"/>
</svg>

</body>
</html>
